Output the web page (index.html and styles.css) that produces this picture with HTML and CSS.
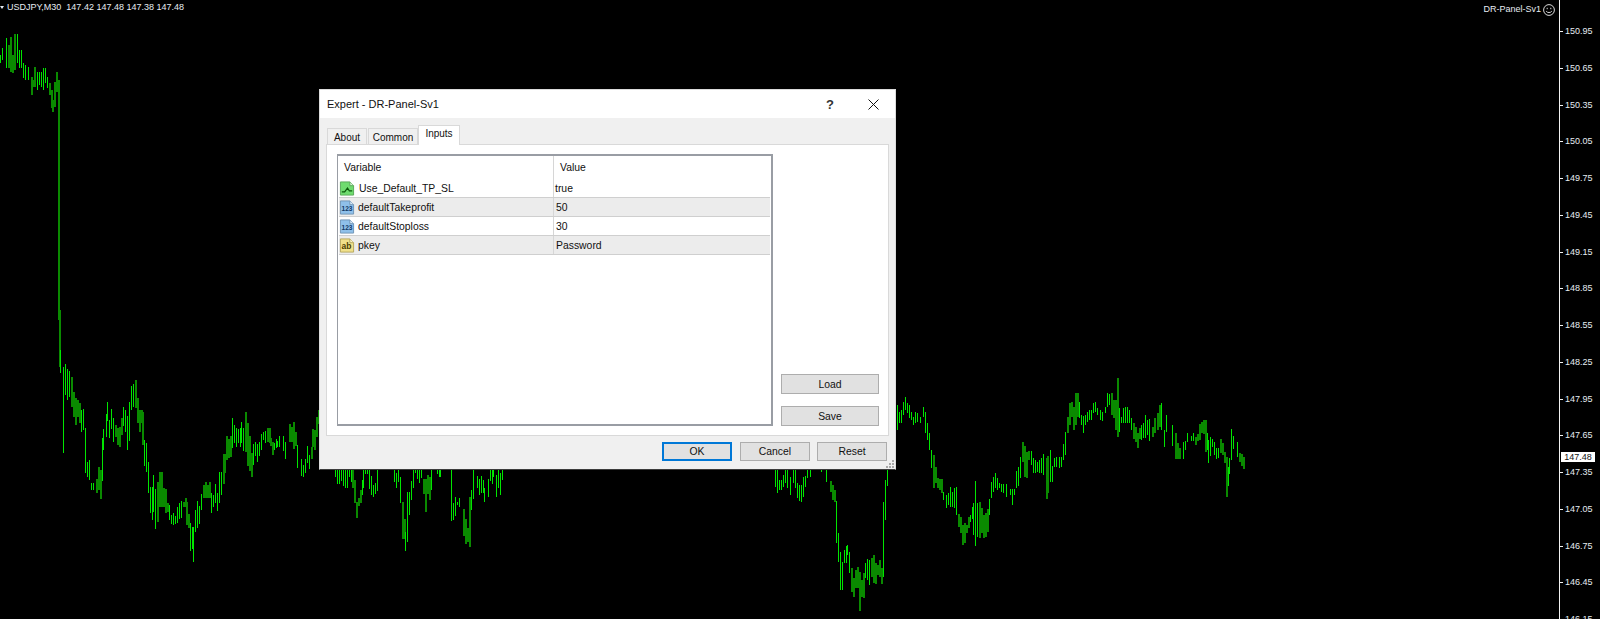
FILE: index.html
```html
<!DOCTYPE html>
<html lang="en">
<head>
    <meta charset="UTF-8">
    <title>USDJPY,M30</title>
    <link rel="stylesheet" href="styles.css">
</head>
<body>
<div class="terminal">
    <svg class="chart" id="chart" width="1559" height="619" viewBox="0 0 1559 619"></svg>

    <div class="chartPane">
        <div class="chartInfo">
            <span class="chartArrow"></span>
            <span class="chartSymbol">USDJPY,M30</span>
            <span>147.42 147.48 147.38 147.48</span>
        </div>
        <div class="expertName">
            <span>DR-Panel-Sv1</span>
            <svg width="12" height="12" viewBox="0 0 12 12" fill="none" stroke="#d8d8d8">
                <circle cx="6" cy="6" r="5.4"/>
                <path d="M3.2 7.2C4.2 9 7.8 9 8.8 7.2"/>
                <path d="M4.2 3.8v1.4M7.8 3.8v1.4"/>
            </svg>
        </div>
    </div>

    <div class="priceAxis">
        <div class="tick">150.95</div>
        <div class="tick">150.65</div>
        <div class="tick">150.35</div>
        <div class="tick">150.05</div>
        <div class="tick">149.75</div>
        <div class="tick">149.45</div>
        <div class="tick">149.15</div>
        <div class="tick">148.85</div>
        <div class="tick">148.55</div>
        <div class="tick">148.25</div>
        <div class="tick">147.95</div>
        <div class="tick">147.65</div>
        <div class="tick">147.35</div>
        <div class="tick">147.05</div>
        <div class="tick">146.75</div>
        <div class="tick">146.45</div>
        <div class="tick">146.15</div>
    </div>
    <div class="priceTag">147.48</div>

    <div class="dialog">
        <div class="titleBar">
            <span class="titleText">Expert - DR-Panel-Sv1</span>
            <span class="helpButton">?</span>
            <svg class="closeButton" width="11" height="11" viewBox="0 0 11 11" stroke="#111" fill="none">
                <path d="M0.5 0.5l10 10M10.5 0.5l-10 10"/>
            </svg>
        </div>
        <div class="dialogBody">
            <div class="tabs">
                <div class="tab tabAbout">About</div>
                <div class="tab tabCommon">Common</div>
                <div class="tab tabActive">Inputs</div>
            </div>
            <div class="tabPane">
                <div class="inputsTable">
                    <div class="tableHead">
                        <div class="colName headName">Variable</div>
                        <div class="colValue headValue">Value</div>
                    </div>
                    <div class="row">
                        <div class="colName">
                            <svg class="rowIcon" width="16" height="17" viewBox="0 0 17 17">
                                <path d="M1.5 1.5h10l4 4v10h-14z" fill="#6fdc6f" stroke="#58a858"/>
                                <path d="M11.5 1.5v4h4" fill="#d8f3d8" stroke="#58a858"/>
                                <path d="M3 12h3l3-4 2 3h3" fill="none" stroke="#0b5a0b" stroke-width="1.3"/>
                            </svg>
                            <span class="nameFirst">Use_Default_TP_SL</span>
                        </div>
                        <div class="colValue valueFirst">true</div>
                    </div>
                    <div class="row rowAlt">
                        <div class="colName">
                            <svg class="rowIcon" width="16" height="17" viewBox="0 0 17 17">
                                <path d="M1.5 1.5h10l4 4v10h-14z" fill="#8fc0ea" stroke="#6f93b5"/>
                                <path d="M11.5 1.5v4h4" fill="#dcecf9" stroke="#6f93b5"/>
                                <text class="iconText iconNumber" x="8.5" y="12.5">123</text>
                            </svg>
                            <span>defaultTakeprofit</span>
                        </div>
                        <div class="colValue">50</div>
                    </div>
                    <div class="row">
                        <div class="colName">
                            <svg class="rowIcon" width="16" height="17" viewBox="0 0 17 17">
                                <path d="M1.5 1.5h10l4 4v10h-14z" fill="#8fc0ea" stroke="#6f93b5"/>
                                <path d="M11.5 1.5v4h4" fill="#dcecf9" stroke="#6f93b5"/>
                                <text class="iconText iconNumber" x="8.5" y="12.5">123</text>
                            </svg>
                            <span>defaultStoploss</span>
                        </div>
                        <div class="colValue">30</div>
                    </div>
                    <div class="row rowAlt">
                        <div class="colName">
                            <svg class="rowIcon" width="16" height="17" viewBox="0 0 17 17">
                                <path d="M1.5 1.5h10l4 4v10h-14z" fill="#f0e08a" stroke="#b5a65c"/>
                                <path d="M11.5 1.5v4h4" fill="#faf4cf" stroke="#b5a65c"/>
                                <text class="iconText iconLetters" x="8" y="12.5">ab</text>
                            </svg>
                            <span>pkey</span>
                        </div>
                        <div class="colValue">Password</div>
                    </div>
                </div>
                <div class="sideButtons">
                    <button class="btn btnSide">Load</button>
                    <button class="btn btnSide">Save</button>
                </div>
            </div>
            <div class="dialogFooter">
                <button class="btn btnFooter btnDefault">OK</button>
                <button class="btn btnFooter">Cancel</button>
                <button class="btn btnFooter">Reset</button>
            </div>
        </div>
        <svg class="grip" width="10" height="10" viewBox="0 0 10 10" fill="#a8a8a8">
            <rect x="7" y="1" width="2" height="2"/>
            <rect x="4" y="4" width="2" height="2"/>
            <rect x="7" y="4" width="2" height="2"/>
            <rect x="1" y="7" width="2" height="2"/>
            <rect x="4" y="7" width="2" height="2"/>
            <rect x="7" y="7" width="2" height="2"/>
        </svg>
    </div>
</div>
<script src="chart.js"></script>
</body>
</html>
```

FILE: styles.css
```css
* {
    box-sizing: border-box;
}

body {
    margin: 0;
    background-color: #000;
    font-family: "Liberation Sans", Arial, sans-serif;
    font-size: 10.4px;
    color: #111;
}

.terminal {
    position: relative;
    width: 1600px;
    height: 619px;
    overflow: hidden;
    display: flex;
}

.chart {
    position: absolute;
    left: 0;
    top: 0;
}

.chartPane {
    position: relative;
    width: 1559px;
    height: 20px;
    display: flex;
    justify-content: space-between;
    color: #e6ecf2;
    font-size: 9px;
    padding: 1px 4px 0 0;
}

.chartInfo {
    display: flex;
    align-items: flex-start;
    gap: 3px;
    line-height: 13px;
}

.chartArrow {
    width: 0;
    height: 0;
    margin-top: 5px;
    border-left: 2px solid transparent;
    border-right: 2px solid transparent;
    border-top: 3px solid #dfe6ee;
}

.chartSymbol {
    margin-right: 2px;
}

.expertName {
    display: flex;
    align-items: flex-start;
    gap: 2px;
    line-height: 15px;
    padding-top: 1px;
}

.expertName svg {
    margin-top: 2px;
}

.priceAxis {
    position: relative;
    width: 41px;
    height: 660px;
    border-left: 1px solid #f2f2f2;
    padding-top: 13px;
    color: #e6ecf2;
    font-size: 9px;
}

.tick {
    position: relative;
    height: 36.75px;
    line-height: 36.75px;
    padding-left: 5px;
}

.tick::before {
    content: "";
    position: absolute;
    left: 0;
    top: 18px;
    width: 3px;
    height: 1px;
    background-color: #f2f2f2;
}

.priceTag {
    position: absolute;
    left: 1561px;
    top: 452px;
    width: 34px;
    height: 10px;
    background-color: #fff;
    color: #111;
    font-size: 9px;
    line-height: 10px;
    text-align: center;
}

.dialog {
    position: absolute;
    left: 319px;
    top: 89px;
    width: 577px;
    height: 381px;
    display: flex;
    flex-direction: column;
    background-color: #f0f0f0;
    border: 1px solid #dcdcdc;
    border-bottom-color: #3c3c3c;
}

.titleBar {
    height: 28px;
    flex-shrink: 0;
    display: flex;
    align-items: center;
    background-color: #fff;
    padding: 0 16px 0 7px;
}

.titleText {
    flex: 1;
    font-size: 11px;
}

.helpButton {
    font-size: 13px;
    font-weight: bold;
    color: #333;
    margin-right: 34px;
}

.dialogBody {
    flex: 1;
    display: flex;
    flex-direction: column;
    padding: 7px 6px 0;
}

.tabs {
    display: flex;
    align-items: flex-end;
    height: 20px;
    padding-left: 1px;
    margin-bottom: -1px;
    font-size: 10px;
}

.tab {
    height: 17px;
    line-height: 17px;
    text-align: center;
    background-color: #f0f0f0;
    border: 1px solid #d9d9d9;
    border-bottom: none;
}

.tabAbout {
    width: 40px;
    margin-right: 1px;
}

.tabCommon {
    width: 50px;
}

.tabActive {
    position: relative;
    width: 42px;
    height: 20px;
    line-height: 16px;
    background-color: #fff;
    z-index: 1;
}

.tabPane {
    height: 292px;
    display: flex;
    background-color: #fff;
    border: 1px solid #d9d9d9;
    padding: 9px 9px 9px 10px;
}

.inputsTable {
    width: 436px;
    height: 272px;
    background-color: #fff;
    border: 1px solid #999da4;
    border-width: 2px 2px 2px 1px;
    padding-right: 1px;
}

.tableHead {
    display: flex;
    height: 23px;
    line-height: 23px;
}

.row {
    display: flex;
    height: 19px;
    line-height: 19px;
    margin-left: 1px;
    border-bottom: 1px solid #cfcfcf;
}

.rowAlt {
    background-color: #ececec;
}

.colName {
    width: 215px;
    flex-shrink: 0;
    display: flex;
    align-items: center;
    gap: 3px;
    border-right: 1px solid #d6d6d6;
}

.colValue {
    flex: 1;
    padding-left: 2px;
}

.tableHead .colName {
    width: 216px;
}

.headName {
    padding-left: 6px;
}

.headValue {
    padding-left: 6px;
}

.rowIcon {
    flex-shrink: 0;
}

.nameFirst {
    margin-left: 1px;
}

.valueFirst {
    padding-left: 1px;
}

.iconText {
    font-family: "Liberation Sans", Arial, sans-serif;
    font-weight: bold;
    text-anchor: middle;
}

.iconNumber {
    font-size: 7px;
    fill: #123a66;
}

.iconLetters {
    font-size: 9px;
    fill: #4a3d00;
}

.sideButtons {
    display: flex;
    flex-direction: column;
    gap: 12px;
    margin-left: 8px;
    padding-top: 220px;
}

.btn {
    font-family: "Liberation Sans", Arial, sans-serif;
    font-size: 10.4px;
    color: #111;
    background-color: #e1e1e1;
    border: 1px solid #adadad;
    padding: 0;
}

.btnSide {
    width: 98px;
    height: 20px;
}

.dialogFooter {
    display: flex;
    justify-content: flex-end;
    gap: 7px;
    padding: 6px 2px 0 0;
}

.btnFooter {
    width: 70px;
    height: 19px;
}

.btnDefault {
    border: 2px solid #0078d7;
    margin-right: 1px;
}

.grip {
    position: absolute;
    right: 0;
    bottom: 0;
}
```

FILE: chart.js
```js
// bars read off the chart as [x, top, bottom] in crop pixels, crop origin first
const cropLeftTop = [0, 0, [
    0,165,190, 6,145,180, 17,113,205, 24,135,205, 30,110,215, 36,165,220, 42,102,210, 50,102,190,
    58,150,205, 64,150,205, 70,188,235, 76,195,240, 84,200,240, 92,232,285, 96,240,260, 103,200,260,
    110,215,270, 116,215,255, 122,215,260, 128,205,270, 134,205,250, 140,230,265, 146,250,285,
    152,270,325, 156,300,335, 162,245,322, 168,215,275, 174,240,960, 178,930,1100
]];

const cropLeftLow = [40, 350, [
    60,0,70, 70,50,310, 76,42,135, 82,58,150, 88,62,140, 94,82,170, 100,125,200, 106,145,225,
    112,150,200, 118,160,220, 124,180,245, 130,178,240, 134,235,370, 140,335,380, 146,330,390,
    152,400,420, 158,400,420, 168,388,430, 174,352,420, 180,360,448, 186,265,392, 190,238,300,
    197,193,262, 202,155,212, 208,210,265, 214,178,237, 220,205,275, 226,225,262, 232,235,285,
    238,232,290, 244,205,255, 248,172,228, 254,180,245, 260,198,300, 266,155,272, 272,108,180,
    278,102,172, 284,90,175, 290,145,218, 296,180,245, 302,180,220, 306,185,285, 312,270,348,
    318,278,365, 324,335,430, 330,410,490, 336,412,510, 340,375,485, 346,418,537, 352,395,515,
    358,365,470, 364,365,472, 370,415,472, 376,418,490, 382,458,485, 386,465,510, 392,495,522,
    398,490,525, 404,498,522, 410,470,520, 416,458,508, 422,452,505, 428,455,470, 434,445,470,
    438,455,525, 444,492,533, 450,518,603, 456,532,598, 460,530,635, 466,480,545, 472,452,535,
    478,468,522, 484,432,480, 490,405,445, 496,395,445, 502,405,445, 506,395,445, 512,428,490,
    518,435,470, 524,403,458, 530,430,482, 536,365,458, 542,365,435, 548,312,402, 552,312,368,
    558,258,330, 564,268,325, 570,258,322, 576,205,295, 582,225,278, 588,235,290, 594,238,278,
    600,235,290, 604,217,278, 610,235,303, 616,185,305, 622,220,348, 628,258,362, 634,310,380,
    638,282,345, 644,275,318, 650,282,337, 656,275,318, 662,252,300, 668,245,270, 674,243,278,
    680,235,275, 686,235,278, 690,265,288, 696,275,315, 702,280,300, 708,268,295, 712,272,292,
    718,258,290, 730,258,302, 736,275,328, 746,222,275, 752,232,275, 758,216,298, 764,245,288,
    770,285,353, 782,326,377, 788,345,380, 794,327,370, 800,288,340, 806,315,357, 812,290,328,
    816,238,290, 822,240,300, 828,200,260, 834,180,222
]];

const cropMiddle = [310, 440, [
    75,90,110, 80,90,132, 86,90,132, 92,90,122, 98,90,138, 104,90,145, 110,90,145, 116,90,110,
    122,90,125, 127,90,145, 133,120,190, 138,185,235, 144,175,198, 150,150,190, 156,120,165,
    160,90,145, 166,90,102, 172,90,102, 178,90,148, 184,108,165, 190,135,170, 196,130,162,
    202,90,152, 252,90,125, 258,98,145, 264,90,125, 270,110,188, 276,185,297, 282,238,297,
    286,275,333, 292,155,305, 298,155,225, 304,122,180, 310,90,145, 316,90,100, 322,90,118,
    328,90,128, 334,90,115, 340,118,162, 345,118,215, 350,105,162, 356,110,180, 362,90,150,
    380,90,102, 386,90,112, 391,90,110, 424,90,242, 430,188,240, 436,170,228, 442,185,195,
    448,175,202, 460,207,288, 466,238,312, 470,265,305, 476,170,322, 482,150,210, 488,90,178,
    500,108,145, 506,118,165, 512,108,160, 518,120,158, 522,145,185, 534,118,170, 540,90,122,
    546,90,132, 550,90,110, 557,105,172, 563,90,145, 569,98,165, 575,90,120
]];

const cropRight = [760, 380, [
    45,270,320, 50,270,338, 56,300,330, 62,300,330, 68,285,320, 74,270,310, 82,270,325, 90,290,345,
    98,270,310, 104,270,325, 112,310,355, 118,315,362, 124,315,367, 130,290,350, 136,288,322,
    142,270,295, 150,270,290, 182,270,275, 198,270,305, 210,303,335, 216,315,360, 222,330,365,
    228,362,488, 234,460,545, 240,515,630, 246,545,630, 252,510,550, 258,498,550, 262,495,525,
    268,515,580, 274,565,637, 280,595,650, 286,570,625, 292,560,625, 298,575,692, 304,600,650,
    310,580,655, 316,550,595, 322,538,600, 328,540,615, 334,535,590, 340,525,610, 346,550,612,
    352,555,585, 358,540,590, 364,565,612, 370,365,590, 376,300,420, 382,270,318, 410,75,150,
    416,95,130, 422,90,130, 428,65,105, 434,50,90, 440,70,100, 446,75,115, 452,95,120, 458,110,135,
    466,95,130, 472,100,125, 480,110,130, 490,82,110, 496,95,160, 502,130,180, 508,160,210,
    514,210,265, 520,225,325, 526,260,310, 532,295,325, 538,298,330, 544,298,340, 550,335,360,
    558,345,385, 564,340,375, 570,322,380, 576,335,380, 582,325,385, 588,322,405, 594,402,440,
    600,410,458, 606,435,495, 612,430,490, 618,435,460, 624,412,445, 630,405,425, 636,380,418,
    640,368,465, 646,302,498, 652,370,470, 658,365,475, 664,385,460, 670,405,475, 676,400,470,
    682,388,455, 688,358,405, 694,305,355, 700,290,335, 706,280,325, 712,295,330, 718,308,325,
    724,312,335, 730,312,340, 738,312,352, 750,328,345, 756,328,375, 762,328,345, 768,272,325,
    774,260,318, 780,232,295, 786,185,245, 792,198,290, 798,215,295, 804,212,240, 812,213,255,
    818,235,280, 824,240,280, 830,245,275, 836,240,280, 842,233,278, 850,222,285, 858,235,358,
    862,228,340, 870,210,305, 876,258,305, 882,235,262, 888,232,262, 896,232,265, 904,232,262,
    910,192,240, 916,155,225, 920,110,160, 926,70,135, 932,65,112, 938,80,150, 944,40,135,
    950,38,110, 956,65,115, 962,105,135, 968,108,160, 974,105,135, 980,95,125, 986,90,120,
    992,90,120, 1000,70,100, 1006,65,95, 1012,85,105, 1020,90,120, 1026,95,122, 1034,80,100,
    1040,40,80, 1046,42,75, 1052,40,105, 1058,60,115, 1064,60,150, 1070,-6,170, 1076,85,155,
    1082,110,130, 1088,85,130, 1094,80,130, 1100,82,130, 1106,90,130, 1112,115,150, 1118,130,178,
    1124,140,185, 1130,160,205, 1136,145,178, 1142,135,180, 1150,130,175, 1156,105,175,
    1162,120,165, 1168,118,182, 1176,140,170, 1182,115,160, 1190,100,150, 1196,75,140, 1204,70,150,
    1212,150,200, 1218,105,155, 1236,135,198, 1246,160,238, 1252,190,238, 1258,205,238,
    1270,185,238, 1276,182,210, 1282,160,185
]];

const cropEnd = [1190, 420, [
    4,48,62, 10,40,62, 15,50,75, 20,42,62, 26,12,60, 32,5,40, 38,0,42, 44,0,95, 50,38,90, 55,60,128,
    61,52,108, 67,58,80, 73,65,105, 79,85,118, 85,85,115, 90,58,100, 95,70,105, 101,95,130, 107,110,230,
    113,140,198, 118,115,162, 124,28,120, 130,48,88, 142,65,112, 148,100,125, 154,102,138, 160,110,148
]];

// stretches where the bars run together and read darker
const darkRanges = [
    [8,14], [31,34], [49,56], [58,59], [70,79], [95,101], [115,121], [135,143], [157,167], [183,188],
    [202,209], [222,231], [245,251], [267,273], [288,296], [311,318], [352,360], [401,404], [423,429],
    [463,469], [830,834], [851,863], [870,881], [933,942], [958,968], [979,987], [1022,1028],
    [1046,1049], [1067,1077], [1111,1117], [1133,1139], [1152,1160], [1175,1180], [1195,1197],
    [1199,1205], [1220,1226], [1239,1244]
];

function isDark(x) {
    return darkRanges.some(function (r) {
        return x >= r[0] && x <= r[1];
    });
}

let bright = "";
let dark = "";

[cropLeftTop, cropLeftLow, cropMiddle, cropRight, cropEnd].forEach(function (crop) {
    const bars = crop[2];
    for (let i = 0; i < bars.length; i += 3) {
        const x = Math.round(crop[0] + bars[i] / 3);
        const top = Math.round(crop[1] + bars[i + 1] / 3);
        const bottom = Math.round(crop[1] + bars[i + 2] / 3);
        const bar = "M" + (x + 0.5) + " " + top + "V" + bottom;
        if (isDark(x)) {
            dark += bar;
        } else {
            bright += bar;
        }
    }
});

document.getElementById("chart").innerHTML =
    '<path d="' + dark + '" stroke="#0a8a00" stroke-width="2" fill="none" shape-rendering="crispEdges"/>' +
    '<path d="' + bright + '" stroke="#00e600" stroke-width="1" fill="none" shape-rendering="crispEdges"/>';
```
